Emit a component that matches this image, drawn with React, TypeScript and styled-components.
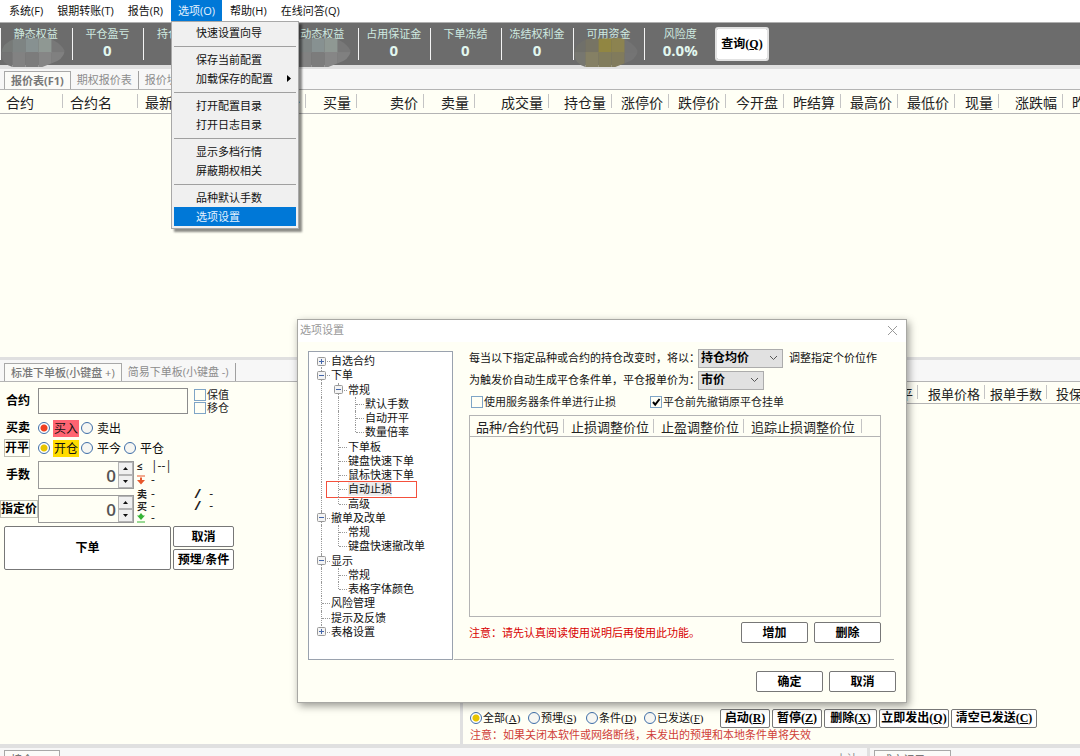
import React, { useState } from "react";
import styled, { createGlobalStyle, css } from "styled-components";

const Global = createGlobalStyle`
  * { box-sizing: border-box; }
  body {
    margin: 0;
    overflow: hidden;
    background: #fffff5;
    color: #111;
    font: 11px/14px "Open Sans", "Noto Sans CJK SC", sans-serif;
  }
  button, input, select { font: inherit; color: inherit; margin: 0; }
  button { white-space: nowrap; }
`;

const line = "#b4b4b4";
const cream = "#fffff5";

const Window = styled.div`
  height: 100vh;
  display: flex;
  flex-direction: column;
  overflow: hidden;
  white-space: nowrap;
`;

/* ---------- menu ---------- */
const MenuBar = styled.nav`
  position: relative;
  z-index: 5;
  flex: none;
  height: 22px;
  display: flex;
  padding-left: 2px;
  background: #fff;
`;
const MenuButton = styled.button<{ $open?: boolean }>`
  height: 21px;
  padding: 0 7px;
  border: 0;
  color: ${(p) => (p.$open ? "#e4f2ff" : "#111")};
  background: ${(p) => (p.$open ? "#0078d7" : "transparent")};
`;
const MenuHolder = styled.div`
  position: relative;
  margin: 0 1px;
`;
const DropMenu = styled.ul`
  position: absolute;
  top: 21px;
  left: 0;
  width: 128px;
  margin: 0;
  padding: 1px 2px 2px;
  list-style: none;
  background: #f0f0f0;
  border: 1px solid #a8a8a8;
  box-shadow: 3px 3px 2px rgba(0, 0, 0, 0.45);
`;
const MenuItem = styled.button<{ $active?: boolean }>`
  position: relative;
  display: flex;
  align-items: center;
  width: 100%;
  height: 19px;
  padding: 0 0 0 22px;
  border: 0;
  background: ${(p) => (p.$active ? "#0078d7" : "transparent")};
  color: ${(p) => (p.$active ? "#e4f2ff" : "#111")};
  svg { margin-left: 14px; }
`;
const MenuRule = styled.li`
  height: 1px;
  margin: 4px 0 3px;
  background: #a0a0a0;
`;

/* ---------- account bar ---------- */
const AccountBar = styled.header`
  flex: none;
  height: 47px;
  display: flex;
  background: #6c6c6c;
  border-top: 1px solid #b0b0b0;
  border-bottom: 4px solid #e0e0e0;
`;
const Stats = styled.dl`
  display: grid;
  grid-template-columns: repeat(10, 1fr);
  width: 716px;
  margin: 0;
`;
const Stat = styled.div`
  position: relative;
  display: flex;
  flex-direction: column;
  align-items: center;
  padding-top: 4px;
  color: #cfeae0;
  &::before {
    content: "";
    position: absolute;
    left: 0;
    top: 5px;
    width: 1px;
    height: 32px;
    background: #f4f4f4;
  }
  dd {
    margin: 0;
    font-size: 15px;
    font-weight: 700;
    line-height: 18px;
    color: #e2f7ef;
  }
  svg { position: absolute; left: 1px; top: 15px; }
`;
const QueryButton = styled.button`
  align-self: flex-start;
  margin-top: 5px;
  width: 52px;
  height: 32px;
  padding: 0;
  background: #fff;
  border: 1px solid #777;
  border-radius: 2px;
  outline: 2px solid #e2e2e2;
  outline-offset: -1px;
  color: #000;
  font: 700 12px/14px "Liberation Serif", "Noto Sans CJK SC", sans-serif;
`;

/* ---------- tabs ---------- */
const TabStrip = styled.div<{ $height: number }>`
  flex: none;
  height: ${(p) => p.$height}px;
  display: flex;
  align-items: flex-end;
  padding-left: 4px;
  background: #f7f7f7;
  border-bottom: 1px solid ${line};
`;
const Tab = styled.button<{ $active?: boolean; $bold?: boolean }>`
  height: 18px;
  padding: 0 6px;
  border: 0;
  border-right: 1px solid #a0a0a0;
  background: transparent;
  color: #8c8c8c;
  ${(p) =>
    p.$active &&
    css`
      color: #777;
      background: #fbfbf8;
      border: 1px solid #a8a8a8;
      border-bottom: 0;
      font-weight: ${p.$bold ? 700 : 500};
    `}
`;

/* ---------- grids ---------- */
const QuotePane = styled.section`
  flex: 267 1 0;
  overflow: hidden;
  border-bottom: 3px solid #e0e0e0;
`;
const DataTable = styled.table<{ $size: number; $height: number }>`
  table-layout: fixed;
  width: 100%;
  border-collapse: collapse;
  font-size: ${(p) => p.$size}px;
  line-height: 16px;
  color: #222;
  tr { border-bottom: 1px solid ${line}; }
  th {
    height: ${(p) => p.$height}px;
    padding: 2px 6px 0;
    font-weight: 400;
    text-align: left;
    background: linear-gradient(#c4c4c4, #c4c4c4) no-repeat right 1px center / 1px 14px;
  }
  th:empty { background: none; }
`;
const QuoteTable = styled(DataTable)`
  width: 1121px;
  th { text-align: right; padding: 3px 7px 0 0; }
  th:nth-child(-n + 2) { text-align: left; padding-left: 6px; }
`;

/* ---------- lower area ---------- */
const Lower = styled.div`
  flex: 384 1 0;
  display: flex;
  min-height: 0;
`;
const OrderPane = styled.section`
  flex: 0 0 463px;
  border-right: 3px solid #e0e0e0;
`;
const QueuePane = styled.section`
  flex: 1;
  min-width: 0;
  display: flex;
  flex-direction: column;
  overflow: hidden;
`;
const QueueTable = styled(DataTable)`
  width: 680px;
  th { text-align: right; padding: 3px 6px 0 0; }
`;
const OrderForm = styled.form`
  padding-top: 6px;
  font-size: 12px;
`;
const FormRow = styled.div<{ $height: number; $gap?: number }>`
  display: flex;
  align-items: center;
  height: ${(p) => p.$height}px;
  margin-bottom: ${(p) => p.$gap || 0}px;
`;
const Caption = styled.label`
  width: 38px;
  padding-left: 6px;
  font-weight: 700;
  color: #000;
`;
const CaptionCell = styled.div`
  width: 38px;
  display: flex;
`;
const CaptionButton = styled.button<{ $indent?: boolean }>`
  margin-left: ${(p) => (p.$indent ? 4 : 0)}px;
  height: 18px;
  padding: 0;
  background: ${cream};
  border: 1px solid #c0c0b4;
  color: #000;
  font-weight: 700;
`;
const TextBox = styled.input`
  width: 150px;
  height: 26px;
  padding: 0 6px;
  background: ${cream};
  border: 1px solid #8c8c8c;
`;
const TickStack = styled.div`
  margin-left: 6px;
  font-size: 11px;
`;
const Tick = styled.label`
  display: flex;
  align-items: center;
  gap: 1px;
  height: 13px;
  color: #222;
`;
const TickBox = styled.input`
  appearance: none;
  width: 12px;
  height: 12px;
  background: ${cream};
  border: 1px solid #7fa5c6;
  &:checked {
    background: ${cream}
      url("data:image/svg+xml,%3Csvg xmlns='http://www.w3.org/2000/svg' viewBox='0 0 10 10'%3E%3Cpath d='M2 5l2.2 2.6L8.6 2' fill='none' stroke='%23000' stroke-width='2'/%3E%3C/svg%3E");
  }
`;
const Choice = styled.label<{ $fill?: string }>`
  display: flex;
  align-items: center;
  gap: 3px;
  margin-right: 2px;
  span {
    padding: 1px;
    line-height: 15px;
    background: ${(p) => p.$fill || "transparent"};
  }
`;
const Radio = styled.input<{ $dot?: string }>`
  appearance: none;
  flex: none;
  width: 12px;
  height: 12px;
  border: 1px solid #3f6ea8;
  border-radius: 50%;
  background: #f6f6f2;
  &:checked {
    background: radial-gradient(circle, ${(p) => p.$dot || "#e8c400"} 0 3px, #fff 4px);
  }
`;
const Spin = styled.div`
  display: flex;
  width: 96px;
  height: 28px;
  border: 1px solid #999;
  input {
    flex: 1;
    min-width: 0;
    padding: 0 2px;
    border: 0;
    background: ${cream};
    text-align: right;
    font-size: 17px;
    font-weight: 600;
    color: #555;
  }
`;
const SpinButtons = styled.div`
  display: grid;
  grid-template-rows: 1fr 1fr;
  width: 15px;
  background: #d8d8d8;
  button {
    display: flex;
    align-items: center;
    justify-content: center;
    padding: 0;
    border: 1px solid #b4b4b4;
    background: #f0f0f0;
  }
`;
const AmountBlock = styled.div`
  display: flex;
  margin: 3px 0;
`;
const Depth = styled.dl`
  display: grid;
  grid-template-columns: 14px 44px auto;
  grid-template-rows: 10px 17px 12px 12px 11px;
  align-items: center;
  margin: 0 0 0 3px;
  color: #222;
  dt { display: flex; font-size: 10px; font-weight: 700; }
  dd { margin: 0; }
  b { font-weight: 700; font-style: italic; margin-right: 6px; }
`;
const Actions = styled.div`
  display: grid;
  grid-template-columns: 167px 61px;
  grid-template-rows: 21px 21px;
  gap: 2px;
  padding-left: 4px;
  button:first-child { grid-row: span 2; }
`;
const PushButton = styled.button<{ $width?: number }>`
  width: ${(p) => (p.$width ? `${p.$width}px` : "auto")};
  height: ${(p) => (p.$width ? "21px" : "auto")};
  padding: 0;
  background: #fff;
  border: 1px solid #777;
  border-radius: 2px;
  color: #000;
  font: 700 12px/14px "Liberation Serif", "Noto Sans CJK SC", sans-serif;
`;
const QueueFooter = styled.footer`
  margin-top: auto;
  padding: 0 0 2px 7px;
`;
const QueueBar = styled.div`
  display: flex;
  align-items: center;
  height: 20px;
  font-family: "Liberation Serif", "Noto Sans CJK SC", sans-serif;
`;
const QueueFilters = styled.fieldset`
  display: flex;
  width: 250px;
  margin: 0;
  padding: 0;
  border: 0;
`;
const QueueChoice = styled(Choice)`
  flex: none;
  width: 58px;
  margin: 0;
  gap: 0;
`;
const QueueButtons = styled.div`
  display: flex;
  gap: 2px;
  button { height: 19px; }
`;
const Warning = styled.p<{ $soft?: boolean }>`
  margin: 0;
  color: ${(p) => (p.$soft ? "#cf4038" : "#d80000")};
`;
const BottomDock = styled.div`
  flex: none;
  display: flex;
  height: 12px;
  overflow: hidden;
  background: #f7f7f7;
  border-top: 4px solid #e0e0e0;
`;
const DockPart = styled.div<{ $grow: number }>`
  flex: ${(p) => p.$grow} 1 0;
  display: flex;
  align-items: flex-start;
  justify-content: space-between;
  padding: 2px 4px 0;
  border-right: 3px solid #e0e0e0;
  &:last-child { border-right: 0; }
`;
const DockTab = styled(Tab)<{ $width: number }>`
  width: ${(p) => p.$width}px;
  text-align: left;
`;
const DockNote = styled.span`
  padding: 2px 6px 0;
  color: #8c8c8c;
`;

/* ---------- options dialog ---------- */
const Dialog = styled.div`
  position: absolute;
  z-index: 4;
  left: 297px;
  top: 319px;
  width: 610px;
  height: 384px;
  display: flex;
  flex-direction: column;
  background: ${cream};
  border: 1px solid #a8a8a4;
  box-shadow: 2px 3px 8px rgba(0, 0, 0, 0.4);
`;
const DialogTitle = styled.div`
  flex: none;
  display: flex;
  align-items: center;
  justify-content: space-between;
  height: 22px;
  padding: 0 8px 2px 2px;
  background: #fff;
  color: #999;
  h2 { margin: 0; font: inherit; }
  button { display: flex; padding: 0; border: 0; background: none; }
`;
const DialogBody = styled.div`
  flex: 1;
  display: flex;
  min-height: 0;
  padding: 9px 12px 0 10px;
`;
const Tree = styled.ul`
  flex: none;
  width: 145px;
  margin: 0;
  padding: 2px 0 20px 8px;
  display: grid;
  grid-auto-rows: 1fr;
  list-style: none;
  background: #fff;
  border: 1px solid #9aa2ae;
`;
const TreeRow = styled.li<{ $marked?: boolean }>`
  display: flex;
  align-items: center;
  min-height: 0;
  ${(p) =>
    p.$marked &&
    css`
      position: relative;
      &::after {
        content: "";
        position: absolute;
        inset: -1px 35px -1px 9px;
        border: 1px solid #f4503c;
      }
    `}
`;
const Guide = styled.i<{ $up?: boolean; $down?: boolean; $arm?: boolean }>`
  position: relative;
  flex: none;
  align-self: stretch;
  display: flex;
  align-items: center;
  width: 17px;
  &::before {
    content: "";
    position: absolute;
    left: 4px;
    top: ${(p) => (p.$up ? "0" : "50%")};
    bottom: ${(p) => (p.$down ? "0" : "50%")};
    border-left: ${(p) => (p.$up || p.$down ? "1px dotted #999" : "0")};
  }
  &::after {
    content: "";
    position: absolute;
    left: 5px;
    top: 50%;
    width: 8px;
    border-top: ${(p) => (p.$arm ? "1px dotted #999" : "0")};
  }
  svg { position: relative; z-index: 1; }
`;
const TreeLabel = styled.span<{ $marked?: boolean }>`
  margin-left: -3px;
  line-height: 14px;
  background: ${(p) => (p.$marked ? "#ececec" : "transparent")};
`;
const Settings = styled.div`
  flex: 1;
  min-width: 0;
  display: flex;
  flex-direction: column;
  margin-left: 1px;
  padding: 0 13px 0 15px;
  border-bottom: 1px solid ${line};
`;
const SettingRow = styled.div<{ $height: number }>`
  flex: none;
  display: flex;
  align-items: center;
  height: ${(p) => p.$height}px;
`;
const SettingLabel = styled.label`
  flex: none;
  width: 229px;
`;
const SelectWrap = styled.span<{ $width: number }>`
  display: flex;
  align-items: center;
  width: ${(p) => p.$width}px;
  margin-right: 6px;
  select {
    width: 100%;
    height: 19px;
    padding: 0 2px;
    appearance: none;
    border: 1px solid #acacac;
    border-radius: 0;
    background: #e1e1e1;
    color: #000;
    font-weight: 700;
    font-size: 12px;
    line-height: 16px;
  }
  svg { flex: none; margin-left: -14px; pointer-events: none; }
`;
const TickCell = styled.div<{ $width?: number }>`
  width: ${(p) => (p.$width ? `${p.$width}px` : "auto")};
  padding-left: 2px;
`;
const RuleBox = styled.div`
  flex: none;
  height: 202px;
  margin-top: 6px;
  border: 1px solid ${line};
`;
const NoteRow = styled.div`
  display: flex;
  align-items: center;
  gap: 6px;
  margin-top: 5px;
  p { margin-right: auto; }
`;
const DialogFooter = styled.div`
  display: flex;
  justify-content: flex-end;
  gap: 6px;
  padding: 11px 10px 10px;
`;

/* ---------- small drawings ---------- */
const Arrow = ({ up }: { up?: boolean }) => (
  <svg width="5" height="3" viewBox="0 0 5 3">
    <path d={up ? "M0 3L2.5 0L5 3z" : "M0 0L2.5 3L5 0z"} fill="#111" />
  </svg>
);
const Chevron = () => (
  <svg width="9" height="6" viewBox="0 0 9 6">
    <path d="M1 1l3.500 3.500L8 1" fill="none" stroke="#555" />
  </svg>
);
const Expander = ({ plus }: { plus?: boolean }) => (
  <svg width="9" height="9" viewBox="0 0 9 9">
    <rect x=".5" y=".5" width="8" height="8" rx="1" fill="#f4f4f4" stroke="#999" />
    <path d={plus ? "M2 4.500h5M4.500 2v5" : "M2 4.500h5"} stroke="#4466aa" />
  </svg>
);
const LimitMark = ({ down }: { down?: boolean }) => (
  <svg width="8" height="10" viewBox="0 0 8 10">
    {down ? (
      <path d="M4 0L6 2.500H8L4 7 0 2.500H2zM0 8.500h8v1H0z" fill="#35b335" />
    ) : (
      <path d="M0 .5h8v1H0zM3 2.500h2V5h3L4 9.500 0 5H3z" fill="#e8582c" />
    )}
  </svg>
);
const Mosaic = ({ id, colors }: { id: string; colors: string[] }) => (
  <svg width="64" height="29" viewBox="0 0 68 31" aria-hidden="true">
    <defs>
      <clipPath id={id}>
        <path d="M14 1L50 0Q63 4 68 14Q66 24 54 27L44 31H12Q1 28 0 17Q1 5 14 1z" />
      </clipPath>
    </defs>
    <g clipPath={`url(#${id})`}>
      {colors.map((c, i) => (
        <rect key={i} x={(i % 5) * 14 - 2} y={Math.floor(i / 5) * 15} width="14" height="16" fill={c} />
      ))}
    </g>
  </svg>
);

const gray = ["#777a78", "#7e8483", "#879191", "#8f9893", "#787878", "#747474", "#828282", "#7c7c7c", "#868686", "#808080"];
const gold = ["#70706a", "#777464", "#918642", "#8c8350", "#737373", "#777770", "#858064", "#817c5c", "#817b5c", "#747474"];

const stats: { name: string; value?: string; mask?: string[] }[] = [
  { name: "静态权益", mask: gray },
  { name: "平仓盈亏", value: "0" },
  { name: "持仓盈亏", value: "0" },
  { name: "手续费", value: "0" },
  { name: "动态权益", mask: gray },
  { name: "占用保证金", value: "0" },
  { name: "下单冻结", value: "0" },
  { name: "冻结权利金", value: "0" },
  { name: "可用资金", mask: gold },
  { name: "风险度", value: "0.0%" },
];

const optionMenu = [
  ["快速设置向导"],
  ["保存当前配置", "加载保存的配置"],
  ["打开配置目录", "打开日志目录"],
  ["显示多档行情", "屏蔽期权相关"],
  ["品种默认手数", "选项设置"],
];

const quoteColumns: [string, number][] = [
  ["合约", 64], ["合约名", 75], ["最新价", 55], ["涨跌", 56], ["买价", 57], ["买量", 51],
  ["卖价", 67], ["卖量", 51], ["成交量", 74], ["持仓量", 63], ["涨停价", 57], ["跌停价", 57],
  ["今开盘", 58], ["昨结算", 57], ["最高价", 57], ["最低价", 57], ["现量", 44], ["涨跌幅", 64], ["昨收盘", 57],
];

const queueColumns: [string, number][] = [
  ["合约", 330], ["开平", 126], ["报单价格", 67], ["报单手数", 62], ["投保", 40], ["", 55],
];

/* level, label, expander, and whether the guide continues below at each level */
const tree: { level: number; label: string; box?: "+" | "-"; lines: boolean[] }[] = [
  { level: 0, label: "自选合约", box: "+", lines: [true] },
  { level: 0, label: "下单", box: "-", lines: [true] },
  { level: 1, label: "常规", box: "-", lines: [true, true] },
  { level: 2, label: "默认手数", lines: [true, true, true] },
  { level: 2, label: "自动开平", lines: [true, true, true] },
  { level: 2, label: "数量倍率", lines: [true, true, false] },
  { level: 1, label: "下单板", lines: [true, true] },
  { level: 1, label: "键盘快速下单", lines: [true, true] },
  { level: 1, label: "鼠标快速下单", lines: [true, true] },
  { level: 1, label: "自动止损", lines: [true, true] },
  { level: 1, label: "高级", lines: [true, false] },
  { level: 0, label: "撤单及改单", box: "-", lines: [true] },
  { level: 1, label: "常规", lines: [true, true] },
  { level: 1, label: "键盘快速撤改单", lines: [true, false] },
  { level: 0, label: "显示", box: "-", lines: [true] },
  { level: 1, label: "常规", lines: [true, true] },
  { level: 1, label: "表格字体颜色", lines: [true, false] },
  { level: 0, label: "风险管理", lines: [true] },
  { level: 0, label: "提示及反馈", lines: [true] },
  { level: 0, label: "表格设置", box: "+", lines: [false] },
];

const Key = ({ k }: { k: string }) => (
  <>
    (<u>{k}</u>)
  </>
);

function Columns({ items }: { items: [string, number][] }) {
  return (
    <>
      <colgroup>
        {items.map(([name, width]) => (
          <col key={name} style={{ width }} />
        ))}
      </colgroup>
      <thead>
        <tr>
          {items.map(([name]) => (
            <th key={name} scope="col">{name}</th>
          ))}
        </tr>
      </thead>
    </>
  );
}

function SpinField({ id }: { id: string }) {
  const [value, setValue] = useState(0);
  return (
    <Spin>
      <input id={id} aria-label={id === "price" ? "指定价" : undefined} value={value} onChange={(e) => setValue(Number(e.target.value) || 0)} />
      <SpinButtons>
        <button type="button" aria-label="增加" onClick={() => setValue(value + 1)}><Arrow up /></button>
        <button type="button" aria-label="减少" onClick={() => setValue(Math.max(0, value - 1))}><Arrow /></button>
      </SpinButtons>
    </Spin>
  );
}

function OptionsDialog() {
  return (
    <Dialog role="dialog" aria-label="选项设置">
      <DialogTitle>
        <h2>选项设置</h2>
        <button type="button" aria-label="关闭">
          <svg width="11" height="11" viewBox="0 0 11 11"><path d="M1 1l9 9M10 1l-9 9" stroke="#999" /></svg>
        </button>
      </DialogTitle>
      <DialogBody>
        <Tree>
          {tree.map((node, i) => {
            const marked = node.label === "自动止损";
            return (
              <TreeRow key={i} $marked={marked}>
                {node.lines.map((down, level) => {
                  const own = level === node.level;
                  return (
                    <Guide key={level} $up={i > 0} $down={down} $arm={own}>
                      {own && node.box && <Expander plus={node.box === "+"} />}
                    </Guide>
                  );
                })}
                <TreeLabel $marked={marked}>{node.label}</TreeLabel>
              </TreeRow>
            );
          })}
        </Tree>
        <Settings>
          <SettingRow $height={14}>
            <SettingLabel htmlFor="base">每当以下指定品种或合约的持仓改变时，将以：</SettingLabel>
            <SelectWrap $width={85}>
              <select id="base"><option>持仓均价</option></select>
              <Chevron />
            </SelectWrap>
            <span>调整指定个价位作</span>
          </SettingRow>
          <SettingRow $height={30}>
            <SettingLabel htmlFor="order">为触发价自动生成平仓条件单，平仓报单价为：</SettingLabel>
            <SelectWrap $width={66}>
              <select id="order"><option>市价</option></select>
              <Chevron />
            </SelectWrap>
          </SettingRow>
          <SettingRow $height={14}>
            <TickCell $width={179}>
              <Tick><TickBox type="checkbox" />使用服务器条件单进行止损</Tick>
            </TickCell>
            <TickCell>
              <Tick><TickBox type="checkbox" defaultChecked />平仓前先撤销原平仓挂单</Tick>
            </TickCell>
          </SettingRow>
          <RuleBox>
            <DataTable $size={13} $height={20}>
              <Columns items={[["品种/合约代码", 95], ["止损调整价位", 90], ["止盈调整价位", 90], ["追踪止损调整价位", 118], ["", 17]]} />
            </DataTable>
          </RuleBox>
          <NoteRow>
            <Warning>注意：请先认真阅读使用说明后再使用此功能。</Warning>
            <PushButton $width={67}>增加</PushButton>
            <PushButton $width={67}>删除</PushButton>
          </NoteRow>
        </Settings>
      </DialogBody>
      <DialogFooter>
        <PushButton $width={67}>确定</PushButton>
        <PushButton $width={67}>取消</PushButton>
      </DialogFooter>
    </Dialog>
  );
}

export default function App() {
  return (
    <Window>
      <Global />
      <MenuBar>
        <MenuButton>系统(F)</MenuButton>
        <MenuButton>银期转账(T)</MenuButton>
        <MenuButton>报告(R)</MenuButton>
        <MenuHolder>
          <MenuButton $open aria-expanded="true">选项(O)</MenuButton>
          <DropMenu>
            {optionMenu.map((group, g) => (
              <React.Fragment key={g}>
                {g > 0 && <MenuRule role="separator" />}
                {group.map((item) => (
                  <li key={item}>
                    <MenuItem $active={item === "选项设置"}>
                      {item}
                      {item === "加载保存的配置" && (
                        <svg width="4" height="7" viewBox="0 0 4 7"><path d="M0 0l4 3.500L0 7z" fill="#000" /></svg>
                      )}
                    </MenuItem>
                  </li>
                ))}
              </React.Fragment>
            ))}
          </DropMenu>
        </MenuHolder>
        <MenuButton>帮助(H)</MenuButton>
        <MenuButton>在线问答(Q)</MenuButton>
      </MenuBar>

      <AccountBar>
        <Stats>
          {stats.map((s, i) => (
            <Stat key={s.name}>
              <dt>{s.name}</dt>
              <dd>{s.value}</dd>
              {s.mask && <Mosaic id={`mask${i}`} colors={s.mask} />}
            </Stat>
          ))}
        </Stats>
        <QueryButton>查询<Key k="Q" /></QueryButton>
      </AccountBar>

      <TabStrip $height={21}>
        <Tab $active $bold>报价表(F1)</Tab>
        <Tab>期权报价表</Tab>
        <Tab>报价块</Tab>
      </TabStrip>
      <QuotePane>
        <QuoteTable $size={14} $height={23}>
          <Columns items={quoteColumns} />
        </QuoteTable>
      </QuotePane>

      <Lower>
        <OrderPane>
          <TabStrip $height={22}>
            <Tab $active>标准下单板(小键盘 +)</Tab>
            <Tab>简易下单板(小键盘 -)</Tab>
          </TabStrip>
          <OrderForm>
            <FormRow $height={26} $gap={4}>
              <Caption htmlFor="contract">合约</Caption>
              <TextBox id="contract" />
              <TickStack>
                <Tick><TickBox type="checkbox" />保值</Tick>
                <Tick><TickBox type="checkbox" />移仓</Tick>
              </TickStack>
            </FormRow>
            <FormRow $height={20}>
              <Caption as="span">买卖</Caption>
              <Choice $fill="#ff6472"><Radio type="radio" name="side" $dot="#f04020" defaultChecked /><span>买入</span></Choice>
              <Choice><Radio type="radio" name="side" /><span>卖出</span></Choice>
            </FormRow>
            <FormRow $height={20}>
              <CaptionCell><CaptionButton type="button" $indent>开平</CaptionButton></CaptionCell>
              <Choice $fill="#ffdc00"><Radio type="radio" name="open" defaultChecked /><span>开仓</span></Choice>
              <Choice><Radio type="radio" name="open" /><span>平今</span></Choice>
              <Choice><Radio type="radio" name="open" /><span>平仓</span></Choice>
            </FormRow>
            <AmountBlock>
              <div>
                <FormRow $height={28} $gap={6}>
                  <Caption htmlFor="lots">手数</Caption>
                  <SpinField id="lots" />
                </FormRow>
                <FormRow $height={28}>
                  <CaptionCell><CaptionButton type="button">指定价</CaptionButton></CaptionCell>
                  <SpinField id="price" />
                </FormRow>
              </div>
              <Depth>
                <dt>≤</dt><dd>|--|</dd><dd />
                <dt><LimitMark /></dt><dd>-</dd><dd />
                <dt>卖</dt><dd>-</dd><dd><b>/</b> -</dd>
                <dt>买</dt><dd>-</dd><dd><b>/</b> -</dd>
                <dt><LimitMark down /></dt><dd>-</dd><dd />
              </Depth>
            </AmountBlock>
            <Actions>
              <PushButton type="button">下单</PushButton>
              <PushButton type="button">取消</PushButton>
              <PushButton type="button">预埋/条件</PushButton>
            </Actions>
          </OrderForm>
        </OrderPane>

        <QueuePane>
          <TabStrip $height={22} />
          <QueueTable $size={13} $height={21}>
            <Columns items={queueColumns} />
          </QueueTable>
          <QueueFooter>
            <QueueBar>
              <QueueFilters>
                <QueueChoice><Radio type="radio" name="queue" defaultChecked /><span>全部<Key k="A" /></span></QueueChoice>
                <QueueChoice><Radio type="radio" name="queue" /><span>预埋<Key k="S" /></span></QueueChoice>
                <QueueChoice><Radio type="radio" name="queue" /><span>条件<Key k="D" /></span></QueueChoice>
                <QueueChoice><Radio type="radio" name="queue" /><span>已发送<Key k="F" /></span></QueueChoice>
              </QueueFilters>
              <QueueButtons>
                <PushButton $width={50}>启动<Key k="R" /></PushButton>
                <PushButton $width={50}>暂停<Key k="Z" /></PushButton>
                <PushButton $width={53}>删除<Key k="X" /></PushButton>
                <PushButton $width={70}>立即发出<Key k="Q" /></PushButton>
                <PushButton $width={86}>清空已发送<Key k="C" /></PushButton>
              </QueueButtons>
            </QueueBar>
            <Warning $soft>注意：如果关闭本软件或网络断线，未发出的预埋和本地条件单将失效</Warning>
          </QueueFooter>
        </QueuePane>
      </Lower>

      <BottomDock>
        <DockPart $grow={81}>
          <DockTab $active $width={56}>持仓</DockTab>
          <DockNote>小计</DockNote>
        </DockPart>
        <DockPart $grow={19}>
          <DockTab $active $width={77}>成交记录</DockTab>
        </DockPart>
      </BottomDock>

      <OptionsDialog />
    </Window>
  );
}
